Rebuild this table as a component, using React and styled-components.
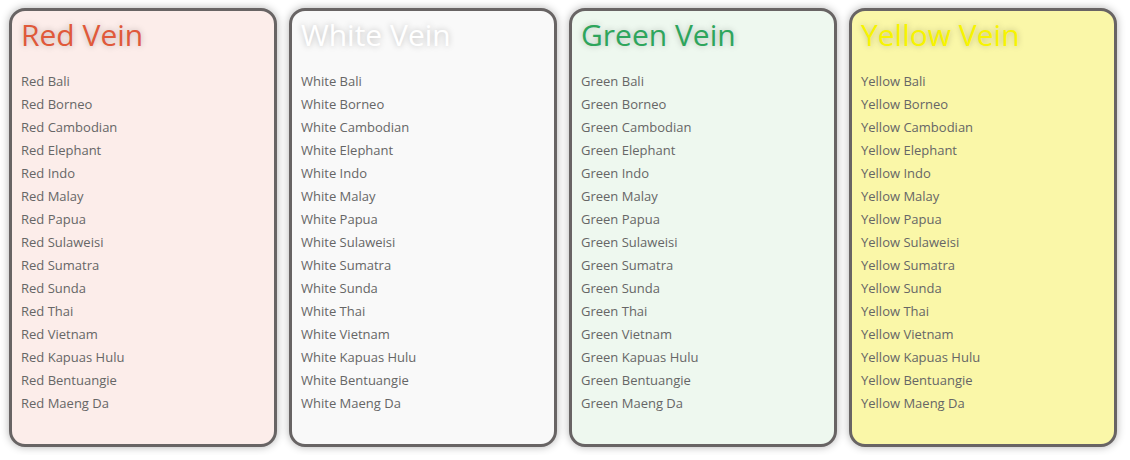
import React from 'react';
import styled, { createGlobalStyle } from 'styled-components';

const GlobalStyle = createGlobalStyle`
  body {
    margin: 0;
    background: #fff;
    font-family: 'Open Sans', 'Liberation Sans', sans-serif;
  }
`;

const Board = styled.div`
  display: flex;
  gap: 12px;
  padding: 8px 9px;
`;

const Card = styled.div`
  box-sizing: border-box;
  width: 268px;
  height: 439px;
  border: 3px solid #686464;
  border-radius: 16px;
  background: ${props => props.bg};
  box-shadow: 0 0 8px rgba(0, 0, 0, 0.3);
  padding: 3px 9px 0;
`;

const Title = styled.h2`
  margin: 0;
  font-size: 30px;
  font-weight: 400;
  line-height: 41px;
  color: ${props => props.color};
  text-shadow: 0 0 6px rgba(0, 0, 0, 0.25);
`;

const List = styled.ul`
  list-style: none;
  margin: 15px 0 0;
  padding: 0;
`;

const Item = styled.li`
  font-size: 13px;
  line-height: 23px;
  color: #666;
`;

const strains = [
  'Bali',
  'Borneo',
  'Cambodian',
  'Elephant',
  'Indo',
  'Malay',
  'Papua',
  'Sulaweisi',
  'Sumatra',
  'Sunda',
  'Thai',
  'Vietnam',
  'Kapuas Hulu',
  'Bentuangie',
  'Maeng Da'
];

const veins = [
  { name: 'Red', bg: '#fcedea', color: '#e0593a' },
  { name: 'White', bg: '#f9f9f9', color: '#ffffff' },
  { name: 'Green', bg: '#eef8ef', color: '#2ea55c' },
  { name: 'Yellow', bg: '#faf7a8', color: '#f7f400' }
];

const App = () => (
  <>
    <GlobalStyle />
    <Board>
      {veins.map(vein => (
        <Card key={vein.name} bg={vein.bg}>
          <Title color={vein.color}>{vein.name} Vein</Title>
          <List>
            {strains.map(s => (
              <Item key={s}>
                {vein.name} {s}
              </Item>
            ))}
          </List>
        </Card>
      ))}
    </Board>
  </>
);

export default App;
